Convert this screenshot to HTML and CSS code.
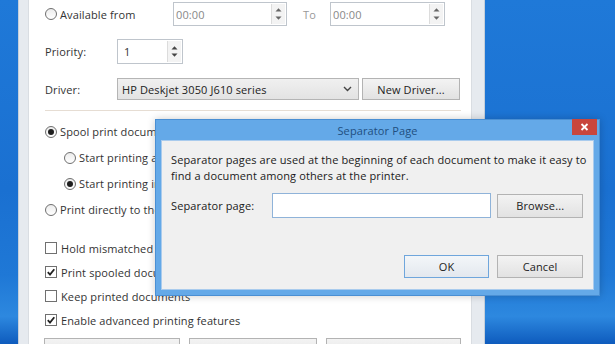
FILE: index.html
```html
<!DOCTYPE html>
<html lang="en">
  <head>
    <meta charset="UTF-8" />
    <title>Printer Properties - Separator Page</title>
    <link rel="stylesheet" href="styles.css">
  </head>
  <body>
    <div class="desktop">
      <!-- printer properties window (advanced tab) -->
      <div class="props">
        <div class="props-body">
          <div class="row row-avail">
            <label class="opt opt-avail"><span class="radio"></span>Available from</label>
            <div class="field time">
              <span class="value">00:00</span>
              <span class="arrows">
                <svg width="9" height="5" viewBox="0 0 9 5"><path d="M1.5 4.5 L4.5 1.2 L7.5 4.5 Z" fill="#666"/></svg>
                <svg width="9" height="5" viewBox="0 0 9 5"><path d="M1.5 0.5 L4.5 3.8 L7.5 0.5 Z" fill="#666"/></svg>
              </span>
            </div>
            <span class="to">To</span>
            <div class="field time">
              <span class="value">00:00</span>
              <span class="arrows">
                <svg width="9" height="5" viewBox="0 0 9 5"><path d="M1.5 4.5 L4.5 1.2 L7.5 4.5 Z" fill="#666"/></svg>
                <svg width="9" height="5" viewBox="0 0 9 5"><path d="M1.5 0.5 L4.5 3.8 L7.5 0.5 Z" fill="#666"/></svg>
              </span>
            </div>
          </div>

          <div class="row row-priority">
            <span class="label">Priority:</span>
            <div class="field priority">
              <span class="value">1</span>
              <span class="arrows">
                <svg width="9" height="5" viewBox="0 0 9 5"><path d="M1.5 4.5 L4.5 1.2 L7.5 4.5 Z" fill="#444"/></svg>
                <svg width="9" height="5" viewBox="0 0 9 5"><path d="M1.5 0.5 L4.5 3.8 L7.5 0.5 Z" fill="#444"/></svg>
              </span>
            </div>
          </div>

          <div class="row row-driver">
            <span class="label">Driver:</span>
            <div class="select">
              <span class="value">HP Deskjet 3050 J610 series</span>
              <svg width="9" height="6" viewBox="0 0 9 6"><path d="M1 1 L4.5 4.5 L8 1" fill="none" stroke="#444" stroke-width="1.4"/></svg>
            </div>
            <div class="btn btn-driver">New Driver...</div>
          </div>

          <div class="divider"></div>

          <div class="options">
            <label class="opt"><span class="radio on"></span>Spool print documents so program finishes printing faster</label>
            <label class="opt sub"><span class="radio"></span>Start printing after last page is spooled</label>
            <label class="opt sub"><span class="radio on"></span>Start printing immediately</label>
            <label class="opt"><span class="radio"></span>Print directly to the printer</label>
          </div>

          <div class="checks">
            <label class="opt"><span class="check"></span>Hold mismatched documents</label>
            <label class="opt"><span class="check">
              <svg width="10" height="10" viewBox="0 0 10 10"><path d="M1.8 5.2 L4 7.6 L8.3 2.2" fill="none" stroke="#222" stroke-width="1.8"/></svg>
            </span>Print spooled documents first</label>
            <label class="opt"><span class="check"></span>Keep printed documents</label>
            <label class="opt"><span class="check">
              <svg width="10" height="10" viewBox="0 0 10 10"><path d="M1.8 5.2 L4 7.6 L8.3 2.2" fill="none" stroke="#222" stroke-width="1.8"/></svg>
            </span>Enable advanced printing features</label>
          </div>

          <!-- bottom buttons, only their top edges are in view -->
          <div class="bottom-buttons">
            <div class="btn wide-1"></div>
            <div class="btn wide-2"></div>
            <div class="btn wide-3"></div>
          </div>
        </div>
      </div>

      <!-- separator page dialog -->
      <div class="dialog">
        <div class="titlebar">
          <span class="title">Separator Page</span>
          <div class="close">
            <svg width="9" height="8" viewBox="0 0 9 8"><path d="M1.5 1 L7.5 7 M7.5 1 L1.5 7" stroke="#fff" stroke-width="1.8"/></svg>
          </div>
        </div>
        <div class="dialog-body">
          <p class="intro">Separator pages are used at the beginning of each document to make it easy to<br>find a document among others at the printer.</p>
          <div class="file-row">
            <span class="file-label">Separator page:</span>
            <div class="file-input"></div>
            <div class="btn btn-browse">Browse...</div>
          </div>
          <div class="dialog-buttons">
            <div class="btn btn-ok">OK</div>
            <div class="btn btn-cancel">Cancel</div>
          </div>
        </div>
      </div>
    </div>
  </body>
</html>
```

FILE: styles.css
```css
/* general */
* {
  box-sizing: border-box;
}

body {
  margin: 0;
  width: 615px;
  height: 344px;
  overflow: hidden;
  font-family: "Open Sans", "Segoe UI", sans-serif;
  font-size: 11px;
  letter-spacing: 0.12px;
  color: #333;
}

/* desktop background */
.desktop {
  position: relative;
  height: 344px;
  padding-left: 18px;
  background: linear-gradient(180deg, #1f79d8 0%, #1a70d1 55%, #1f78d6 80%, #2d88df 92%, #0e5bbd 100%);
}

/* printer properties window */
.props {
  width: 467px;
  height: 100%;
  background: #e6eaef;
  border-left: 1px solid #c5cfda;
  border-right: 1px solid #c5cfda;
  padding: 0 12px 0 9px;
}

.props-body {
  height: 100%;
  background: #fff;
  padding: 2px 10px 0 16px;
  border-left: 1px solid #d9dde2;
  border-right: 1px solid #d9dde2;
}

.row {
  display: flex;
  align-items: center;
}

.row-avail {
  height: 24px;
}

.row-priority {
  height: 25px;
  margin-top: 13px;
}

.row-driver {
  height: 22px;
  margin-top: 14px;
}

.label {
  width: 72px;
}

.opt {
  display: flex;
  align-items: center;
  height: 24px;
  white-space: nowrap;
}

.opt-avail {
  width: 128px;
}

.sub {
  margin-left: 19px;
}

/* radio and checkbox */
.radio {
  flex: none;
  width: 12px;
  height: 12px;
  margin-right: 3px;
  border: 1px solid #6f6f6f;
  border-radius: 50%;
  background: linear-gradient(#ececec, #fff);
}

.radio.on::after {
  content: "";
  display: block;
  width: 6px;
  height: 6px;
  margin: 2px;
  border-radius: 50%;
  background: #1e1e1e;
}

.check {
  flex: none;
  display: flex;
  align-items: center;
  justify-content: center;
  width: 12px;
  height: 12px;
  margin-right: 4px;
  border: 1px solid #707070;
  background: #fff;
}

/* inputs */
.field {
  display: flex;
  align-items: stretch;
  height: 100%;
  border: 1px solid #bfc5cc;
  background: #fff;
}

.field .value {
  flex: 1;
  display: flex;
  align-items: center;
  padding-left: 2px;
}

.time {
  width: 114px;
  color: #888;
}

.time:last-child {
  width: 115px;
}

.priority {
  width: 66px;
}

.priority .value {
  padding-left: 6px;
}

.arrows {
  width: 14px;
  margin: 1px;
  display: flex;
  flex-direction: column;
  justify-content: space-evenly;
  align-items: center;
  background: #f3f3f3;
  border-left: 1px solid #dcdcdc;
}

.to {
  width: 43px;
  padding-left: 16px;
  color: #999;
}

.select {
  display: flex;
  align-items: center;
  justify-content: space-between;
  width: 242px;
  height: 100%;
  padding: 0 6px 0 4px;
  border: 1px solid #b5b5b5;
  background: linear-gradient(#f0f0f0, #e3e3e3);
  color: #222;
}

/* buttons */
.btn {
  display: flex;
  align-items: center;
  justify-content: center;
  border: 1px solid #b3b3b3;
  background: linear-gradient(#f3f3f3, #e2e2e2);
  color: #222;
}

.btn-driver {
  width: 98px;
  height: 100%;
  margin-left: 3px;
}

.divider {
  height: 1px;
  margin: 10px 0 0;
  background: #e6ddd3;
}

.options {
  display: flex;
  flex-direction: column;
  gap: 1px;
  margin-top: 8px;
}

.options .opt {
  height: 25px;
}

.checks {
  display: flex;
  flex-direction: column;
  margin-top: 14px;
}

.bottom-buttons {
  display: flex;
  gap: 9px;
  margin: 6px 0 0 -1px;
}

.bottom-buttons .btn {
  height: 23px;
}

.wide-1 {
  width: 136px;
}

.wide-2 {
  width: 128px;
}

.wide-3 {
  width: 135px;
}

/* separator page dialog */
.dialog {
  position: absolute;
  left: 155px;
  top: 119px;
  width: 445px;
  height: 177px;
  display: flex;
  flex-direction: column;
  padding: 0 5px 5px;
  background: #64a9e8;
  border: 1px solid #4a8fd3;
  box-shadow: 0 0 8px rgba(0, 0, 0, 0.2);
  color: #1a1a1a;
}

.titlebar {
  position: relative;
  height: 20px;
  flex: none;
  display: flex;
  align-items: center;
  justify-content: center;
}

.title {
  color: #1f4f80;
}

.close {
  position: absolute;
  top: -1px;
  right: -3px;
  width: 25px;
  height: 16px;
  display: flex;
  align-items: center;
  justify-content: center;
  background: #c9463d;
}

.dialog-body {
  flex: 1;
  padding: 11px 10px 0 9px;
  background: #f0f0f0;
  border: 1px solid #a9cbed;
}

.intro {
  margin: 0;
  line-height: 16px;
  white-space: nowrap;
}

.file-row {
  display: flex;
  align-items: center;
  height: 25px;
  margin-top: 9px;
}

.file-label {
  width: 101px;
}

.file-input {
  width: 221px;
  height: 100%;
  background: #fff;
  border: 1px solid #8fb3d9;
}

.btn-browse {
  width: 86px;
  height: 24px;
  margin-left: 6px;
}

.dialog-buttons {
  display: flex;
  justify-content: flex-end;
  gap: 8px;
  margin-top: 37px;
}

.dialog-buttons .btn {
  height: 23px;
}

.btn-ok {
  width: 85px;
  border-color: #6fa6dc;
  background: linear-gradient(#f3f6f9, #e3e8ee);
}

.btn-cancel {
  width: 86px;
}
```
